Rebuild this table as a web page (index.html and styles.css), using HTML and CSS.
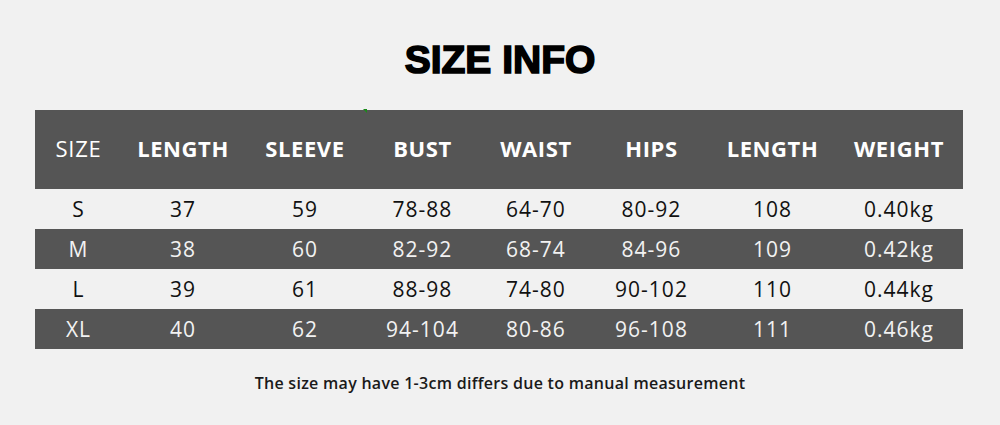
FILE: index.html
```html
<!DOCTYPE html>
<html>
<head>
<meta charset="utf-8">
<link rel="stylesheet" href="styles.css">
</head>
<body>
<div class="page">
  <h1 class="title">SIZE INFO</h1>
  <div class="table">
    <div class="row head">
      <div class="c c-size">SIZE</div>
      <div class="c b">LENGTH</div>
      <div class="c b">SLEEVE</div>
      <div class="c b">BUST</div>
      <div class="c b">WAIST</div>
      <div class="c b">HIPS</div>
      <div class="c b">LENGTH</div>
      <div class="c b">WEIGHT</div>
      <span class="mark"></span>
    </div>
    <div class="row light">
      <div class="c">S</div><div class="c">37</div><div class="c">59</div><div class="c">78-88</div><div class="c">64-70</div><div class="c">80-92</div><div class="c">108</div><div class="c">0.40kg</div>
    </div>
    <div class="row dark">
      <div class="c">M</div><div class="c">38</div><div class="c">60</div><div class="c">82-92</div><div class="c">68-74</div><div class="c">84-96</div><div class="c">109</div><div class="c">0.42kg</div>
    </div>
    <div class="row light">
      <div class="c">L</div><div class="c">39</div><div class="c">61</div><div class="c">88-98</div><div class="c">74-80</div><div class="c">90-102</div><div class="c">110</div><div class="c">0.44kg</div>
    </div>
    <div class="row dark">
      <div class="c">XL</div><div class="c">40</div><div class="c">62</div><div class="c">94-104</div><div class="c">80-86</div><div class="c">96-108</div><div class="c">111</div><div class="c">0.46kg</div>
    </div>
  </div>
  <p class="note">The size may have 1-3cm differs due to manual measurement</p>
</div>
</body>
</html>
```
FILE: styles.css
```css
html, body {
  margin: 0;
  padding: 0;
  background: #f1f1f1;
}
.page {
  width: 1000px;
  height: 425px;
  padding-top: 38px;
  box-sizing: border-box;
  font-family: "Open Sans", "Noto Sans", sans-serif;
}
.title {
  margin: 0;
  height: 72px;
  text-align: center;
  font-family: "Liberation Sans", Arial, sans-serif;
  font-weight: 900;
  font-size: 39px;
  line-height: 44px;
  color: #000;
  -webkit-text-stroke: 1.6px #000;
  letter-spacing: 0;
}
.table {
  margin-left: 35px;
  width: 928px;
}
.row {
  display: grid;
  grid-template-columns: 86px 123px 121px 114px 113px 118px 124px 129px;
  height: 40px;
  align-items: center;
  position: relative;
}
.row.head {
  height: 79px;
  background: #555555;
  color: #fff;
}
.row.light {
  color: #111;
}
.row.dark {
  background: #555555;
  color: #f2f2f2;
}
.c {
  text-align: center;
  font-size: 21px;
  letter-spacing: 1px;
  text-indent: 1px;
}
.head .c {
  font-size: 22px;
  letter-spacing: 0.6px;
  padding-bottom: 3px;
}
.head .c-size {
  font-weight: 400;
  letter-spacing: 0.8px;
}
.b {
  font-weight: 700;
}
.mark {
  position: absolute;
  left: 328px;
  top: -1px;
  width: 0;
  height: 0;
  border-left: 4px solid transparent;
  border-top: 4px solid #1a8a1a;
}
.note {
  margin: 23px 0 0;
  text-align: center;
  font-size: 16px;
  font-weight: 600;
  letter-spacing: 0.28px;
  color: #1a1a1a;
}
```
